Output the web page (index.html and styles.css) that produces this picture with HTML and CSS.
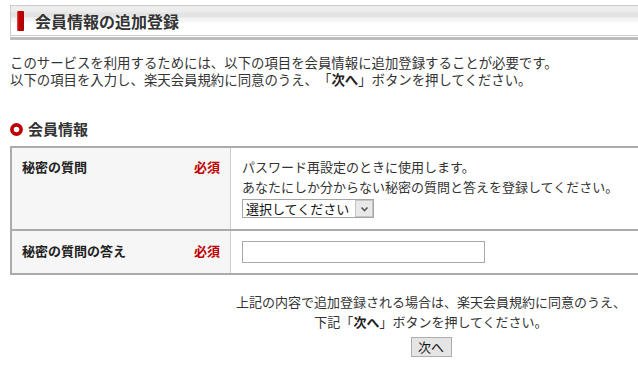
FILE: index.html
```html
<!DOCTYPE html>
<html lang="ja">
<head>
<meta charset="utf-8">
<title>会員情報の追加登録</title>
<link rel="stylesheet" href="styles.css">
</head>
<body>
<div class="page">
  <h1 class="page-title"><span class="title-bar"></span>会員情報の追加登録</h1>

  <p class="intro">このサービスを利用するためには、以下の項目を会員情報に追加登録することが必要です。<br>以下の項目を入力し、楽天会員規約に同意のうえ、「<b>次へ</b>」ボタンを押してください。</p>

  <h2 class="section-title">
    <svg class="ring" width="13" height="13" viewBox="0 0 13 13"><circle cx="6.5" cy="6.5" r="4.6" fill="none" stroke="#c00000" stroke-width="3.6"/></svg>
    会員情報
  </h2>

  <table class="form-table">
    <tr class="row-question">
      <th><div class="label"><span>秘密の質問</span><span class="req">必須</span></div></th>
      <td>
        <div class="help">パスワード再設定のときに使用します。<br>あなたにしか分からない秘密の質問と答えを登録してください。</div>
        <div class="select-wrap">
          <select class="select"><option>選択してください</option></select>
          <span class="select-btn"><svg width="9" height="6" viewBox="0 0 9 6"><path d="M1.5 1.5 L4.5 4.5 L7.5 1.5" fill="none" stroke="#555" stroke-width="1.6"/></svg></span>
        </div>
      </td>
    </tr>
    <tr class="row-answer">
      <th><div class="label"><span>秘密の質問の答え</span><span class="req">必須</span></div></th>
      <td><input class="text-input" type="text"></td>
    </tr>
  </table>

  <div class="submit-area">
    <p class="submit-note">上記の内容で追加登録される場合は、楽天会員規約に同意のうえ、<br>下記「<b>次へ</b>」ボタンを押してください。</p>
    <button class="next-btn" type="button">次へ</button>
  </div>
</div>
</body>
</html>
```

FILE: styles.css
```css
html, body {
  margin: 0;
  padding: 0;
  overflow: hidden;
  background: #fff;
}
body {
  font-family: "Noto Sans CJK JP", "Noto Sans", sans-serif;
  font-size: 13px;
  color: #333;
  text-spacing-trim: space-all;
}
.page {
  width: 842px;
  margin-left: 10px;
  padding-top: 5px;
}
.page-title {
  margin: 0;
  height: 29px;
  border: 1px solid #cccccc;
  background: linear-gradient(#efefef 0px, #ebebeb 6px, #e3e3e3 7px, #e3e3e3 11px, #f4f4f4 12px, #f8f8f8 16px, #ffffff 17px, #ffffff 100%);
  box-shadow: 0 1px 0 #fff, 0 4px 0 #bdbdbd;
  display: flex;
  align-items: center;
  font-size: 16px;
  font-weight: bold;
  color: #333;
  line-height: 20px;
}
.title-bar {
  width: 7px;
  height: 20px;
  margin-left: 6px;
  margin-right: 11px;
  background: linear-gradient(90deg, #e05050 0, #c00000 2px, #b00000 100%);
  border-radius: 1px;
}
.intro {
  margin: 18px 0 0 0;
  font-size: 13.4px;
  line-height: 17px;
  color: #333;
}
.intro b { color: #222; }
.section-title {
  margin: 31px 0 0 0;
  display: flex;
  align-items: center;
  gap: 5px;
  font-size: 15px;
  line-height: 20px;
  font-weight: bold;
  color: #333;
}
.ring { display: block; }
.form-table {
  margin-top: 7px;
  width: 100%;
  border-collapse: collapse;
  border: 2px solid #ababab;
}
.form-table th {
  width: 198px;
  background: #f6f6f6;
  text-align: left;
  vertical-align: top;
  font-weight: bold;
  color: #222;
  border-right: 1px solid #cfcfcf;
  padding: 9px 10px 0 10px;
  line-height: 20px;
}
.form-table tr + tr th,
.form-table tr + tr td {
  border-top: 2px solid #ababab;
}
.label {
  display: flex;
  justify-content: space-between;
}
.req {
  color: #bf0000;
  font-weight: bold;
}
.form-table td {
  vertical-align: top;
  padding: 9px 11px 11px 11px;
  line-height: 20px;
  color: #333;
}
.row-answer th { padding-top: 10px; }
.row-answer td { padding: 10px 11px; }
.help { line-height: 20px; }
.select-wrap {
  position: relative;
  width: 132px;
  height: 19px;
  margin-top: 2px;
}
.select {
  appearance: none;
  -webkit-appearance: none;
  box-sizing: border-box;
  width: 132px;
  height: 19px;
  margin: 0;
  padding: 0 0 0 3px;
  border: 1px solid #a5a5a5;
  border-radius: 0;
  background: #fff;
  font-family: inherit;
  font-size: 13px;
  line-height: 17px;
  color: #111;
}
.select-btn {
  position: absolute;
  right: 1px;
  top: 1px;
  width: 18px;
  height: 17px;
  box-sizing: border-box;
  border: 1px solid #c4c4c4;
  background: #e9e9e9;
  display: flex;
  align-items: center;
  justify-content: center;
  pointer-events: none;
}
.text-input {
  display: block;
  box-sizing: border-box;
  width: 243px;
  height: 22px;
  margin: 0;
  border: 1px solid #a9a9a9;
  border-radius: 0;
  padding: 0 3px;
  font-family: inherit;
  font-size: 13px;
}
.submit-area {
  margin-top: 17px;
  text-align: center;
}
.submit-note {
  margin: 0;
  line-height: 20px;
  color: #333;
}
.submit-note b { color: #222; }
.next-btn {
  margin-top: 5px;
  width: 41px;
  height: 20px;
  padding: 0;
  border: 1px solid #adadad;
  background: #e5e5e5;
  font-family: inherit;
  font-size: 13px;
  line-height: 18px;
  color: #111;
  border-radius: 0;
}
```
